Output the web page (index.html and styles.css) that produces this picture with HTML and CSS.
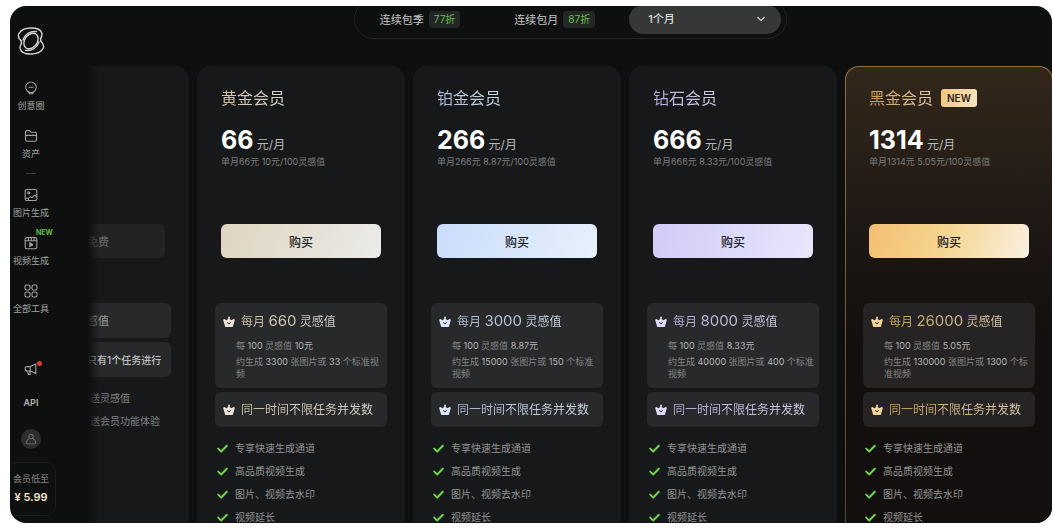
FILE: index.html
```html
<!DOCTYPE html>
<html lang="zh-CN">
<head>
<meta charset="utf-8">
<meta name="viewport" content="width=device-width, initial-scale=1">
<title>会员</title>
<link rel="stylesheet" href="styles.css">
</head>
<body>
<svg width="0" height="0" class="defs" aria-hidden="true">
  <symbol id="crown" viewBox="0 0 12 12"><path fill-rule="evenodd" d="M6 .6a1 1 0 0 1 .6 1.8L8 4.3l2.3-1.1a1 1 0 0 1 1.4 1.2L10 10.2a1.200 1.200 0 0 1-1.100.9H3.100A1.200 1.200 0 0 1 2 10.200L.3 4.400a1 1 0 0 1 1.400-1.200L4 4.300l1.400-1.900A1 1 0 0 1 6 .6ZM4 6.400 6 8.600l2-2.200-.6-.5L6 7.300 4.600 5.900Z"/></symbol>
  <symbol id="check" viewBox="0 0 11 11"><path d="M1.200 5.600 4.200 8.500 9.800 2.800" fill="none" stroke="#6fd34c" stroke-width="2" stroke-linecap="round" stroke-linejoin="round"/></symbol>
</svg>
<div class="app">
  <nav class="side">
    <a class="logo" href="#" aria-label="首页">
      <svg viewBox="0 0 28 28" width="28" height="28" fill="none" stroke="#d4d6d5" stroke-width="1.400" stroke-linecap="round" stroke-linejoin="round">
        <ellipse cx="14" cy="14" rx="6.200" ry="8.600" transform="rotate(38 14 14)"/>
        <path d="M4.300 14C1.800 11.600.8 9 1.800 6.800 3.800 2.800 9.500 1 14.500 1c5.200 0 9.300 2 10.300 5 .6 2-.2 3.800-1.300 5.800"/>
        <path d="M23.700 14c2.500 2.400 3.500 5 2.500 7.200-2 4-7.700 5.800-12.700 5.800-5.200 0-9.300-2-10.300-5-.6-2 .2-3.800 1.300-5.800"/>
        <path d="M4.300 14c-.2 1-.1 1.800.2 2.200M23.700 14c.2-1 .1-1.800-.2-2.200"/>
        <path d="M6 13C8 7.500 13 3.800 19.500 4.600M22 15c-2 5.500-7 9.200-13.500 8.400"/>
      </svg>
    </a>
    <a class="item" href="#">
      <svg viewBox="0 0 16 16" class="ico"><circle cx="8" cy="7.300" r="5.300"/><path d="M6 7.300h4M6.500 13.800h3M5.700 11.800l.8 2M10.300 11.800l-.8 2"/></svg>
      <span>创意圈</span>
    </a>
    <a class="item" href="#">
      <svg viewBox="0 0 16 16" class="ico"><path d="M2.500 4.200c0-1 .5-1.600 1.500-1.600h2.500L8 4.200h4c1 0 1.500.6 1.500 1.500v6c0 1-.6 1.600-1.500 1.600H4c-1 0-1.500-.6-1.500-1.500ZM2.500 7.400h11"/></svg>
      <span>资产</span>
    </a>
    <hr class="rule">
    <a class="item" href="#">
      <svg viewBox="0 0 16 16" class="ico"><rect x="2.200" y="2.500" width="11.600" height="11" rx="1.500"/><circle cx="5.700" cy="5.700" r="1"/><path d="M2.500 11.200h2.800c1 0 1.200-1.400 2.200-1.400s1 1.200 2 .6l2-2.200 2.300 1.200M5.500 13.300v-2"/></svg>
      <span>图片生成</span>
    </a>
    <a class="item" href="#">
      <svg viewBox="0 0 16 16" class="ico"><rect x="2.200" y="2.500" width="11.600" height="11.300" rx="1.500"/><path d="M2.200 5.800h11.600M5.500 2.600v3M8.300 2.600v3M11 2.600v3"/><path d="M6.800 7.800v3.800l3-1.900Z" fill="#a0a2a1"/></svg>
      <span>视频生成</span>
      <em class="flag">NEW</em>
    </a>
    <a class="item" href="#">
      <svg viewBox="0 0 16 16" class="ico"><rect x="2" y="2" width="5" height="5" rx="1.400"/><rect x="9" y="2" width="5" height="5" rx="1.400"/><rect x="2" y="9" width="5" height="5" rx="1.400"/><rect x="9" y="9" width="5" height="5" rx="1.400"/></svg>
      <span>全部工具</span>
    </a>
    <a class="news" href="#" aria-label="公告">
      <svg viewBox="0 0 16 16" class="ico"><path d="M2.200 6.200 4 5.600h3.200L12.800 3v9.600L7.200 10H4.200c-1.200 0-2-.8-2-2ZM4.600 10l.8 3.400h1.800L6.800 10M7.200 5.800V10"/></svg>
      <i class="dot"></i>
    </a>
    <a class="api" href="#">API</a>
    <a class="avatar" href="#" aria-label="账户">
      <svg viewBox="0 0 12 12" width="12" height="12" fill="none" stroke="#666867" stroke-width="1.100"><circle cx="6" cy="3.600" r="2.200"/><path d="M4.300 5.600C2.200 6.800 1.200 8 1.200 9.600c0 .8.500 1.200 1.200 1.200h7.200c.7 0 1.200-.4 1.200-1.200 0-1.600-1-2.800-3.100-4"/></svg>
    </a>
    <a class="promo" href="#"><span>会员低至</span><strong>¥ 5.99</strong></a>
  </nav>

  <main class="main">
    <div class="cycle">
      <button class="tab" type="button">连续包季<span class="off">77折</span></button>
      <button class="tab" type="button">连续包月<span class="off">87折</span></button>
      <label class="term">
        <select aria-label="购买时长"><option>1个月</option></select>
        <svg viewBox="0 0 10 10" width="10" height="10"><path d="M1.800 3.500 5 6.600l3.200-3.100" fill="none" stroke="#d0d2d1" stroke-width="1.300" stroke-linecap="round" stroke-linejoin="round"/></svg>
      </label>
    </div>

    <div class="plans">
      <section class="card free">
        <button class="buy" type="button" disabled>免费</button>
        <div class="box single">感值</div>
        <div class="box single">只有1个任务进行</div>
        <ul class="list"><li>送灵感值</li><li>送会员功能体验</li></ul>
      </section>

      <section class="card gold">
        <h2 class="name"><span class="tint">黄金会员</span></h2>
        <p class="price"><strong>66</strong> 元/月</p>
        <p class="note">单月66元 10元/100灵感值</p>
        <button class="buy" type="button">购买</button>
        <div class="box">
          <h3 class="perk"><svg class="crown"><use href="#crown"/></svg><span class="tint">每月 <b>660</b> 灵感值</span></h3>
          <p class="fine">每 <b>100</b> 灵感值 <b>10元</b></p>
          <p class="fine">约生成 <b>3300</b> 张图片或 <b>33</b> 个标准视频</p>
        </div>
        <div class="box single"><svg class="crown"><use href="#crown"/></svg><span class="tint">同一时间不限任务并发数</span></div>
        <ul class="list">
          <li><svg class="check"><use href="#check"/></svg>专享快速生成通道</li>
          <li><svg class="check"><use href="#check"/></svg>高品质视频生成</li>
          <li><svg class="check"><use href="#check"/></svg>图片、视频去水印</li>
          <li><svg class="check"><use href="#check"/></svg>视频延长</li>
        </ul>
      </section>

      <section class="card platinum">
        <h2 class="name"><span class="tint">铂金会员</span></h2>
        <p class="price"><strong>266</strong> 元/月</p>
        <p class="note">单月266元 8.87元/100灵感值</p>
        <button class="buy" type="button">购买</button>
        <div class="box">
          <h3 class="perk"><svg class="crown"><use href="#crown"/></svg><span class="tint">每月 <b>3000</b> 灵感值</span></h3>
          <p class="fine">每 <b>100</b> 灵感值 <b>8.87元</b></p>
          <p class="fine">约生成 <b>15000</b> 张图片或 <b>150</b> 个标准视频</p>
        </div>
        <div class="box single"><svg class="crown"><use href="#crown"/></svg><span class="tint">同一时间不限任务并发数</span></div>
        <ul class="list">
          <li><svg class="check"><use href="#check"/></svg>专享快速生成通道</li>
          <li><svg class="check"><use href="#check"/></svg>高品质视频生成</li>
          <li><svg class="check"><use href="#check"/></svg>图片、视频去水印</li>
          <li><svg class="check"><use href="#check"/></svg>视频延长</li>
        </ul>
      </section>

      <section class="card diamond">
        <h2 class="name"><span class="tint">钻石会员</span></h2>
        <p class="price"><strong>666</strong> 元/月</p>
        <p class="note">单月666元 8.33元/100灵感值</p>
        <button class="buy" type="button">购买</button>
        <div class="box">
          <h3 class="perk"><svg class="crown"><use href="#crown"/></svg><span class="tint">每月 <b>8000</b> 灵感值</span></h3>
          <p class="fine">每 <b>100</b> 灵感值 <b>8.33元</b></p>
          <p class="fine">约生成 <b>40000</b> 张图片或 <b>400</b> 个标准视频</p>
        </div>
        <div class="box single"><svg class="crown"><use href="#crown"/></svg><span class="tint">同一时间不限任务并发数</span></div>
        <ul class="list">
          <li><svg class="check"><use href="#check"/></svg>专享快速生成通道</li>
          <li><svg class="check"><use href="#check"/></svg>高品质视频生成</li>
          <li><svg class="check"><use href="#check"/></svg>图片、视频去水印</li>
          <li><svg class="check"><use href="#check"/></svg>视频延长</li>
        </ul>
      </section>

      <section class="card black">
        <h2 class="name"><span class="tint">黑金会员</span><span class="new">NEW</span></h2>
        <p class="price"><strong>1314</strong> 元/月</p>
        <p class="note">单月1314元 5.05元/100灵感值</p>
        <button class="buy" type="button">购买</button>
        <div class="box">
          <h3 class="perk"><svg class="crown"><use href="#crown"/></svg><span class="tint">每月 <b>26000</b> 灵感值</span></h3>
          <p class="fine">每 <b>100</b> 灵感值 <b>5.05元</b></p>
          <p class="fine">约生成 <b>130000</b> 张图片或 <b>1300</b> 个标准视频</p>
        </div>
        <div class="box single"><svg class="crown"><use href="#crown"/></svg><span class="tint">同一时间不限任务并发数</span></div>
        <ul class="list">
          <li><svg class="check"><use href="#check"/></svg>专享快速生成通道</li>
          <li><svg class="check"><use href="#check"/></svg>高品质视频生成</li>
          <li><svg class="check"><use href="#check"/></svg>图片、视频去水印</li>
          <li><svg class="check"><use href="#check"/></svg>视频延长</li>
        </ul>
      </section>
    </div>
  </main>
</div>
</body>
</html>
```
FILE: styles.css
```css
* { box-sizing: border-box; }
body {
  margin: 0;
  height: 100vh;
  padding: 6px 1px 5px 10px;
  background: #fff;
  color: #a0a2a1;
  font-family: Inter, "Noto Sans CJK SC", sans-serif;
  font-size: 10px;
  overflow: hidden;
}
.defs { position: absolute; }
h2, h3, p, ul { margin: 0; padding: 0; font-weight: 400; }
ul { list-style: none; }
a { color: inherit; text-decoration: none; }
button, select { font-family: inherit; border: 0; margin: 0; padding: 0; background: none; color: inherit; }

.app {
  display: flex;
  height: 100%;
  border-radius: 16px;
  background: #0e100f;
  overflow: hidden;
}

/* sidebar */
.side {
  flex: 0 0 78px;
  display: flex;
  flex-direction: column;
  align-items: center;
  padding: 21px 36px 7px 0;
}
.logo { display: flex; margin-bottom: 25px; }
.item {
  position: relative;
  display: flex;
  flex-direction: column;
  align-items: center;
  gap: 4px;
  margin-bottom: 16px;
  font-size: 9px;
  line-height: 12px;
  white-space: nowrap;
}
.ico {
  display: block;
  width: 16px;
  height: 16px;
  fill: none;
  stroke: #a0a2a1;
  stroke-width: 1.1;
  stroke-linecap: round;
  stroke-linejoin: round;
}
.rule { width: 10px; height: 1px; margin: -3px 0 13px; border: 0; background: #383a39; }
.flag {
  position: absolute;
  top: -8px;
  left: 23px;
  color: #62c043;
  font-size: 7px;
  font-style: normal;
  font-weight: 700;
}
.news { position: relative; margin-top: auto; margin-bottom: 20px; }
.dot {
  position: absolute;
  top: 0;
  right: -3px;
  width: 5px;
  height: 5px;
  border-radius: 50%;
  background: #e5392c;
}
.api { margin-bottom: 20px; color: #b4b6b5; font-size: 9px; font-weight: 600; line-height: 12px; }
.avatar {
  display: grid;
  place-items: center;
  width: 20px;
  height: 20px;
  margin-bottom: 13px;
  border-radius: 50%;
  background: #2c2e2d;
}
.promo {
  display: flex;
  flex-direction: column;
  align-items: center;
  width: 50px;
  margin: 0 -4px;
  padding: 10px 0 9px;
  border: 1px solid #1c1e1d;
  border-radius: 10px;
  color: #8a8680;
  font-size: 9px;
  line-height: 12px;
  white-space: nowrap;
}
.promo strong { margin-top: 4px; color: #f0e2c4; font-size: 11px; line-height: 17px; font-weight: 600; }

/* main area */
.main {
  position: relative;
  flex: 1;
  min-width: 0;
  display: flex;
  flex-direction: column;
  align-items: center;
  margin-right: -1px;
  overflow: hidden;
}
.main::before {
  content: "";
  position: absolute;
  z-index: 1;
  inset: 0 auto 0 0;
  width: 12px;
  background: linear-gradient(90deg, #0e100f, #0e100f00);
}
.cycle {
  display: flex;
  align-items: center;
  height: 40px;
  margin: -7px 0 27px;
  padding: 0 5px 0 25px;
  border: 1px solid #222423;
  border-radius: 20px;
  flex: none;
}
.tab {
  display: flex;
  align-items: center;
  gap: 5px;
  margin-right: 54px;
  color: #c4c6c5;
  font-size: 11px;
}
.tab + .tab { margin-right: 34px; }
.off {
  padding: 0 5px;
  border-radius: 4px;
  background: #242625;
  color: #62c043;
  font-size: 10px;
  line-height: 17px;
}
.term {
  display: flex;
  align-items: center;
  width: 152px;
  height: 29px;
  padding: 0 15px 0 19px;
  border-radius: 15px;
  background: #363837;
}
.term select {
  flex: 1;
  appearance: none;
  color: #dcdedd;
  font-size: 11px;
  font-weight: 500;
  outline: 0;
}

.plans {
  flex: 1;
  align-self: stretch;
  display: flex;
  justify-content: flex-end;
  gap: 8px;
}
.card {
  flex: 1 0 208px;
  padding: 20px 18px 0;
  border-radius: 14px 14px 0 0;
  background: #17181a;
}
.tint {
  background: var(--ink);
  background-clip: text;
  -webkit-background-clip: text;
  color: transparent;
}
.name { display: flex; align-items: center; gap: 8px; padding-left: 6px; font-size: 16px; line-height: 24px; }
.price { height: 32px; margin-top: 14px; padding-left: 6px; color: #b8bab9; font-size: 12px; line-height: 32px; }
.price strong { color: #fff; font-size: 25px; font-weight: 700; }
.note { padding-left: 6px; color: #7c7e7d; font-size: 9px; line-height: 12px; white-space: nowrap; }
.buy {
  display: block;
  width: calc(100% - 12px);
  height: 34px;
  margin: 56px 6px 45px;
  border-radius: 6px;
  background: var(--fill);
  color: #1a1a1a;
  font-size: 12px;
  font-weight: 500;
}
.box {
  margin-bottom: 4px;
  padding: 8px 3px 8px 8px;
  border-radius: 6px;
  background: #28292b;
}
.perk, .single {
  display: flex;
  align-items: center;
  gap: 6px;
  font-size: 12px;
  line-height: 20px;
  white-space: nowrap;
}
.single { height: 35px; padding: 0 8px; }
.perk { margin-bottom: 8px; }
.perk b { font-size: 15px; font-weight: 400; }
.crown { flex: none; width: 12px; height: 12px; fill: var(--crown); }
.fine { margin-bottom: 4px; padding-left: 13px; color: #858786; font-size: 9px; line-height: 12px; }
.fine:last-child { margin-bottom: 0; }
.fine b { color: #b4b6b5; font-weight: 400; }
.list { padding: 6px 0 0 2px; }
.list li { display: flex; align-items: center; gap: 7px; color: #929493; font-size: 10px; line-height: 23px; white-space: nowrap; }
.check { flex: none; width: 11px; height: 11px; }

.gold { --ink: linear-gradient(90deg, #cfc0a4, #d8d6d0); --crown: #ece4d8; --fill: linear-gradient(110deg, #dfd4c0, #ebebe8); }
.platinum { --ink: linear-gradient(90deg, #abb9d6, #d0dae6); --crown: #dce8fb; --fill: linear-gradient(110deg, #c9dcfb, #e8f1fb); }
.diamond { --ink: linear-gradient(90deg, #b3addb, #d2d0e4); --crown: #e0dcfc; --fill: linear-gradient(110deg, #d0cbf8, #e8e7fc); }
.black {
  --ink: linear-gradient(90deg, #c99d55, #dccfb4);
  --crown: #f5d79c;
  --fill: linear-gradient(110deg, #f3bf72, #f5d48d 45%, #faf0e2);
  padding: 19px 17px 0;
  border: 1px solid transparent;
  border-bottom: 0;
  background:
    linear-gradient(180deg, #33271b, #1b1613 40%, #120f0e 60%) padding-box,
    linear-gradient(180deg, #94713a, #5a4629) border-box;
}
.black .box { background: #252323; }
.new {
  padding: 0 6px;
  border-radius: 3px;
  background: linear-gradient(110deg, #f3c67c, #f8e6c4);
  color: #2a2117;
  font-size: 10px;
  font-weight: 600;
  line-height: 18px;
}

/* free tier, partly behind the sidebar */
.free .buy {
  margin-top: 138px;
  padding-left: 82px;
  background: #222325;
  color: #626465;
  font-size: 11px;
  text-align: left;
}
.free .single { padding-left: 88px; color: #9c9e9d; font-size: 11px; }
.free .single + .single { color: #c0c2c1; font-size: 10px; font-weight: 500; }
.free .list { padding: 6px 0 0 91px; }
.free .list li { color: #808281; }
```
